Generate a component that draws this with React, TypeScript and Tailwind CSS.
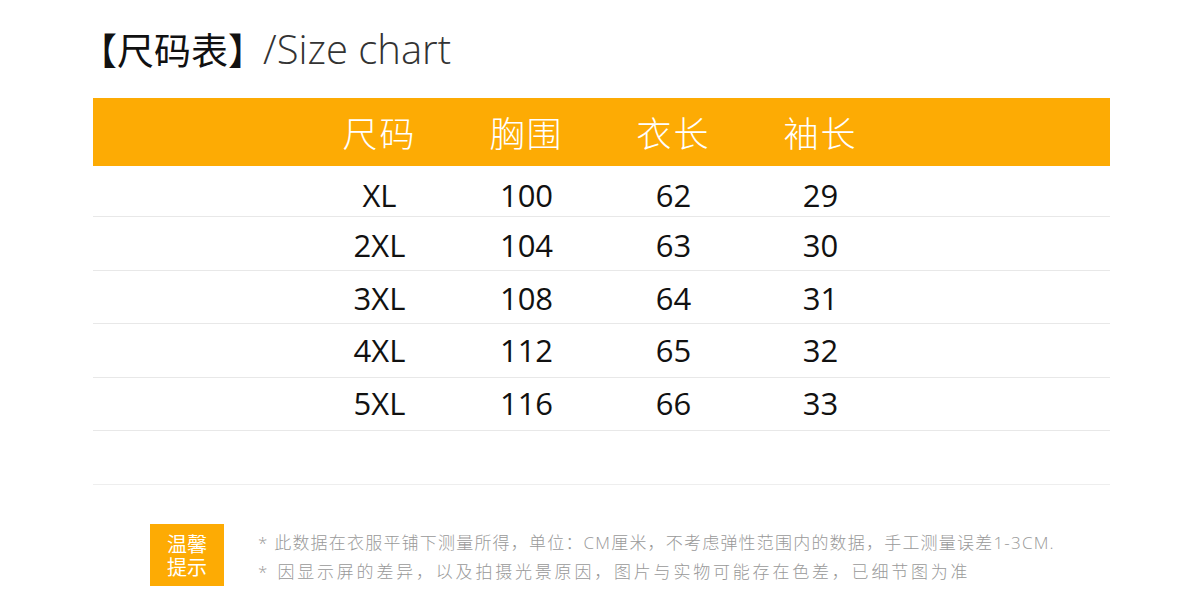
import React from 'react';

const rows = [
  ['XL', '100', '62', '29'],
  ['2XL', '104', '63', '30'],
  ['3XL', '108', '64', '31'],
  ['4XL', '112', '65', '32'],
  ['5XL', '116', '66', '33'],
];

// text drifts up slightly row by row in the original
const rowPad = ['pt-[6px]', 'pt-[4px]', 'pt-[2px]', 'pt-0', 'pb-[2px]'];

const headers = ['尺码', '胸围', '衣长', '袖长'];

const cjk = { fontFamily: '"Open Sans", "Noto Sans CJK SC", sans-serif' };

export default function App() {
  return (
    <div className="w-[1200px] h-[608px] bg-white overflow-hidden" style={cjk}>
      {/* Title */}
      <div className="pl-[80px] pt-[25px] h-[98px] flex items-start">
        <h1 className="text-[37px] leading-[48px] text-[#111] font-normal" style={{ fontFamily: '"Noto Sans CJK SC", sans-serif' }}>
          【尺码表】
        </h1>
        <span className="text-[40px] leading-[48px] text-[#333] font-light -ml-[2px]" style={{ fontFamily: '"Open Sans", sans-serif' }}>
          /Size chart
        </span>
      </div>

      {/* Table */}
      <div className="mx-[93px] w-[1017px]">
        <div className="h-[68px] bg-[#fdab04] grid grid-cols-[213px_147px_147px_147px_147px] items-center">
          <div />
          {headers.map((h) => (
            <div
              key={h}
              className="text-center text-white text-[35px] font-light tracking-[2px]"
              style={{ fontFamily: '"Noto Sans CJK SC", sans-serif' }}
            >
              {h}
            </div>
          ))}
        </div>
        {rows.map((r, i) => (
          <div
            key={r[0]}
            className={`grid grid-cols-[213px_147px_147px_147px_147px] items-center border-b border-[#e8e8e8] ${i === 0 ? 'h-[51px]' : 'h-[53.5px]'}`}
          >
            <div />
            {r.map((c, j) => (
              <div key={j} className={`text-center text-[31px] text-[#111] ${rowPad[i]}`}>
                {c}
              </div>
            ))}
          </div>
        ))}
        <div className="h-[54px] border-b border-[#eeeeee]" />
      </div>

      {/* Notes */}
      <div className="flex items-start pl-[150px] pt-[39px] gap-[34px]">
        <div
          className="w-[74px] h-[62px] bg-[#fdab04] text-white text-[20px] leading-[23px] flex items-center justify-center text-center"
          style={{ fontFamily: '"Noto Sans CJK SC", sans-serif' }}
        >
          <p>
            温馨
            <br />
            提示
          </p>
        </div>
        <div className="text-[17px] leading-[29px] text-[#999] pt-[4px] font-light" style={cjk}>
          <p className="tracking-[1.2px]">* 此数据在衣服平铺下测量所得，单位：CM厘米，不考虑弹性范围内的数据，手工测量误差1-3CM.</p>
          <p className="tracking-[2.8px]">* 因显示屏的差异，以及拍摄光景原因，图片与实物可能存在色差，已细节图为准</p>
        </div>
      </div>
    </div>
  );
}
